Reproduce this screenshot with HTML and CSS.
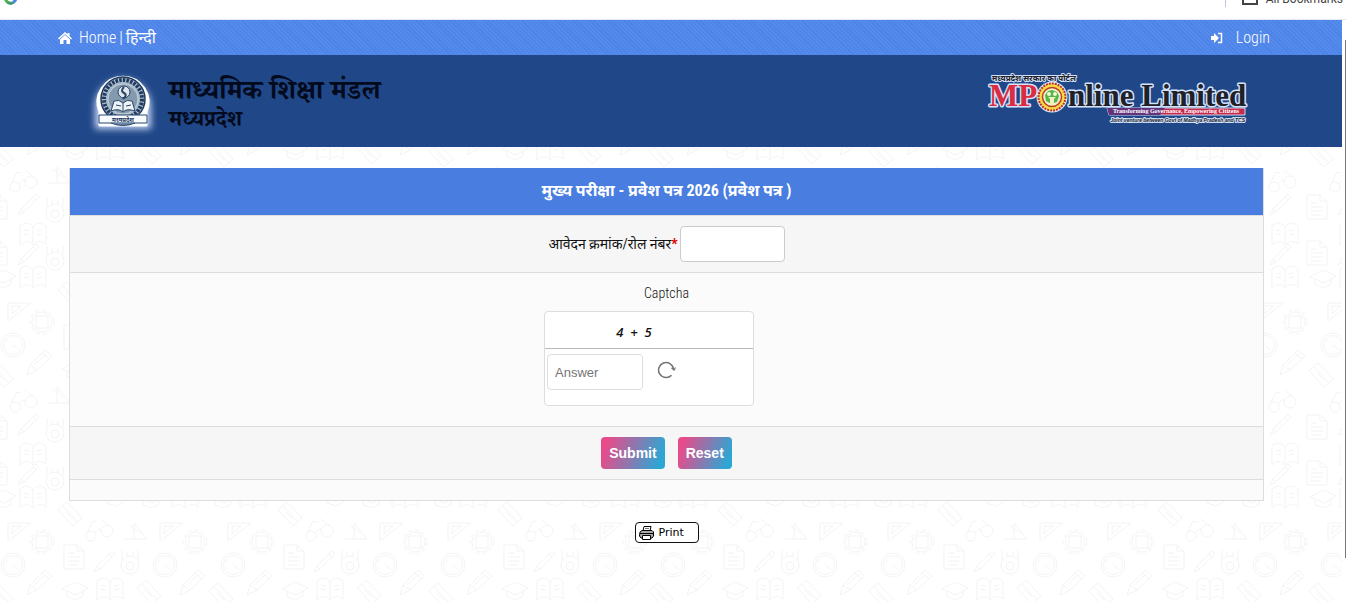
FILE: index.html
```html
<!DOCTYPE html>
<html lang="hi">
<head>
<meta charset="utf-8">
<title>माध्यमिक शिक्षा मंडल</title>
<link rel="stylesheet" href="styles.css">
</head>
<body>
<div class="bookmarks">
  <svg class="google" width="14" height="14" viewBox="0 0 14 14" fill="none" stroke-width="3"><path d="M2 5A5 5 0 0 0 5 12" stroke="#4caf50"/><path d="M4 11.500A5 5 0 0 0 10 11" stroke="#3d9a72"/><path d="M9.500 11A5 5 0 0 0 12 6" stroke="#4285f4"/></svg>
  <span class="divider"></span>
  <svg width="16" height="16" viewBox="0 0 16 16" fill="none" stroke="#444" stroke-width="2"><path d="M1 3h5l2 2h7v10H1z"/></svg>
  <span class="all">All Bookmarks</span>
</div>
<div class="viewport">
  <div class="page">
    <svg class="doodles" width="100%" height="100%" aria-hidden="true">
      <defs>
        <g id="tri"><path d="M0 0H23L0 18ZM4 3H13L4 11Z"/></g>
        <g id="gear"><circle r="10"/><circle r="12" stroke-dasharray="4 3"/><path d="M-6-6H6V6H-6Z"/></g>
        <g id="clock"><circle r="12"/><circle r="9.500"/><path d="M0 0L6 5M-7-5L-5-3"/></g>
        <g id="doc"><path d="M0 0H13L20 6V24H0ZM13 0V6H20M4 8H10M4 12H16M4 16H16M4 20H14"/></g>
        <g id="pen"><path d="M0 22L3 16L18 1L21 4L6 19ZM3 16L6 19M15 4L18 7"/></g>
        <g id="medal"><circle r="9" cy="3"/><circle r="4" cy="4"/><path d="M-8-2V-12M8-2V-12M-3-5V-10M3-5V-10"/></g>
        <g id="cap"><path d="M0 7L13 0L26 6L14 13ZM5 10V15L14 18L21 14V9"/></g>
        <g id="book"><path d="M0 4C5 0 9 0 13 5C17 0 21 0 26 4V22C20 18 17 19 13 23C9 18 5 19 0 23ZM13 5V23M4 8L9 9M4 12L9 13M17 9L22 8M17 13L22 12"/></g>
        <g id="pencil"><path d="M0 25L3 15L18 0L25 6L10 20ZM3 15L10 20M15 3L22 9M7 15L19 4"/></g>
        <g id="eraser"><path d="M0 8L9 0L24 16L15 24ZM5 4L20 20M8 10L15 17"/></g>
        <g id="glasses"><circle cx="6" cy="17" r="5"/><circle cx="22" cy="12" r="6"/><path d="M10 14Q14 8 17 11M2 14L8 2L12 3M25 7L16 0"/></g>
        <g id="square"><path d="M0 18H22L9 2V18M5 4L16 13"/></g>
        <pattern id="school" width="220" height="220" y="48" patternUnits="userSpaceOnUse">
          <g fill="none" stroke="#f3f3f3" stroke-width="1">
            <use href="#tri" x="8" y="15"/><use href="#gear" x="42" y="34"/><use href="#clock" x="13" y="57"/><use href="#doc" x="64" y="37"/><use href="#pen" x="94" y="42"/><use href="#medal" x="130" y="54"/><use href="#clock" x="165" y="57"/><use href="#gear" x="195" y="34"/><use href="#tri" x="160" y="15"/><use href="#square" x="125" y="13"/><use href="#glasses" x="85" y="11"/>
            <use href="#pencil" x="27" y="62"/><use href="#cap" x="62" y="74"/><use href="#book" x="97" y="69"/><use href="#eraser" x="137" y="72"/><use href="#pencil" x="180" y="62"/><use href="#eraser" x="209" y="75"/><use href="#eraser" x="-11" y="75"/>
            <use href="#glasses" x="9" y="102"/><use href="#square" x="48" y="97"/><use href="#pen" x="18" y="125"/><use href="#medal" x="55" y="142"/><use href="#book" x="20" y="154"/><use href="#pen" x="18" y="175"/><use href="#medal" x="55" y="190"/><use href="#book" x="20" y="197"/>
            <use href="#glasses" x="168" y="102"/><use href="#pen" x="170" y="125"/><use href="#book" x="172" y="154"/><use href="#pen" x="170" y="175"/><use href="#book" x="172" y="197"/><use href="#doc" x="207" y="127"/><use href="#doc" x="-13" y="127"/><use href="#doc" x="207" y="173"/><use href="#doc" x="-13" y="173"/><use href="#cap" x="210" y="202"/><use href="#cap" x="-10" y="202"/><use href="#cap" x="138" y="202"/>
            <use href="#eraser" x="58" y="-6"/><use href="#eraser" x="58" y="214"/><use href="#cap" x="102" y="200"/>
          </g>
        </pattern>
      </defs>
      <rect width="100%" height="100%" fill="url(#school)"/>
    </svg>
    <nav class="topbar">
      <div class="links">
        <svg width="14" height="12" viewBox="0 0 14 12" fill="#fff"><path d="M7 0L0 6.500L1 7.500L7 2.200L13 7.500L14 6.500L11.500 4V1H9.500V2.300Z"/><path d="M2 7.500L7 3L12 7.500V12H8.500V8H5.500V12H2Z"/></svg>
        <a href="#">Home</a><span class="bar">|</span><a class="hindi" href="#">हिन्दी</a>
      </div>
      <a class="login" href="#">
        <svg width="12" height="12" viewBox="0 0 12 12"><path d="M0 4H3V1L8 6L3 11V8H0Z" fill="#fff"/><path d="M7 1.500H10.500V10.500H7" fill="none" stroke="#fff" stroke-width="1.500"/></svg>
        <span>Login</span>
      </a>
    </nav>
    <header class="masthead">
      <div class="board">
        <svg width="78" height="76" viewBox="0 0 78 76">
          <defs><filter id="glow" x="-30%" y="-30%" width="160%" height="160%"><feGaussianBlur stdDeviation="3.500"/></filter></defs>
          <path d="M11 44A28 28 0 1 1 67 44V66H11Z" fill="#c4d6f5" filter="url(#glow)"/>
          <path d="M16 49A25 25 0 1 1 62 49V62H16Z" fill="#fff" stroke="#fff" stroke-width="3" stroke-linejoin="round"/>
          <circle cx="39" cy="36" r="22" fill="#a9bbcb" stroke="#20395c" stroke-width="1.500"/>
          <circle cx="39" cy="36" r="19" fill="none" stroke="#203a61" stroke-width="4" stroke-dasharray="2.500 1.200"/>
          <circle cx="39" cy="36" r="15" fill="#8299ae" stroke="#c4d0da" stroke-width="1"/>
          <circle cx="40" cy="29" r="6" fill="#dce6ec" stroke="#294365"/><path d="M40 24Q36 28 40 30T39 36" fill="none" stroke="#294365" stroke-width="2"/>
          <path d="M27 48L30 38Q35 36 39 40Q43 36 48 38L51 48Q43 45 39 49Q35 45 27 48Z" fill="#edf3f6" stroke="#294365"/><path d="M39 40V48M32 42L37 43M42 43L47 42" stroke="#294365"/>
          <path d="M15 52H63V60H15Z" fill="#f7faff" stroke="#29466f"/><path d="M27 60Q39 65 51 60" fill="#6c89a3" stroke="#29466f"/>
          <text class="seal" x="39" y="59" text-anchor="middle">मध्यप्रदेश</text>
        </svg>
        <div class="names"><h1>माध्यमिक शिक्षा मंडल</h1><p>मध्यप्रदेश</p></div>
      </div>
      <svg class="mponline" width="264" height="58" viewBox="0 0 264 58">
        <g class="halo"><text class="brand mp" x="4" y="38">MP</text><text class="brand" x="83" y="38">nline Limited</text><text class="portal" x="7" y="13">मध्यप्रदेश सरकार का पोर्टल</text><text class="joint" x="260" y="54" text-anchor="end">Joint venture between Govt of Madhya Pradesh and TCS</text></g>
        <path d="M122 40H260V47H124Z" fill="#c7284b" stroke="#ccdaf0"/><path d="M122 40H180L175 47H124Z" fill="#65327c"/>
        <text class="tag" x="191" y="45" text-anchor="middle">Transforming Governance, Empowering Citizens</text>
        <circle cx="67" cy="29" r="15.500" fill="#dce7f5"/><circle cx="67" cy="29" r="13.500" fill="#f5dc43" stroke="#bd302b" stroke-width="2" stroke-dasharray="2 1"/><circle cx="67" cy="29" r="9.500" fill="#edf3c2" stroke="#c23b2f" stroke-width="1.500"/>
        <path d="M65 35L61 33L60 27L63 23L67 22L72 24L74 28L72 34L69 35Z" fill="#55b54e"/><circle cx="64" cy="26" r="2" fill="#f5f4d4"/><circle cx="70" cy="26" r="2" fill="#f5f4d4"/><path d="M63 29H71L69 31V36H65V31Z" fill="#f2efbf"/>
      </svg>
    </header>
    <main>
      <form class="panel">
        <h2>मुख्य परीक्षा - प्रवेश पत्र 2026 (प्रवेश पत्र )</h2>
        <div class="row roll"><label for="roll">आवेदन क्रमांक/रोल नंबर<b>*</b></label><input id="roll" type="text"></div>
        <div class="row captcha">
          <label for="answer">Captcha</label>
          <div class="box">
            <div class="sum">4&nbsp; + &nbsp;5</div>
            <div class="answer"><input id="answer" type="text" placeholder="Answer"><button class="refresh" type="button" aria-label="Refresh"><svg width="20" height="18" viewBox="0 0 20 18" fill="none" stroke="#747474" stroke-width="1.500"><path d="M14.500 14.200A7.500 7.500 0 1 1 16.500 8"/><path d="M14.500 7L17 9L18.500 6.500" stroke-width="1.200"/></svg></button></div>
          </div>
        </div>
        <div class="row actions"><button type="submit">Submit</button><button type="reset">Reset</button></div>
        <div class="row blank"></div>
      </form>
      <button class="print" type="button"><svg width="15" height="14" viewBox="0 0 15 14" stroke="#000" fill="#fff"><path d="M4 5L5 .5H12L11 5"/><path d="M1 6L3 4.500H13L14.500 6V10L13 12H2L.5 10Z" fill="#aaa"/><path d="M1 7.500H14" /><path d="M3.500 9.500H11.500V13.500H3.500Z"/><path d="M6 2.500H10" stroke="#777"/></svg>Print</button>
    </main>
  </div>
  <div class="scroll"></div>
</div>
</body>
</html>
```
FILE: styles.css
```css
* { box-sizing: border-box; }
body { margin: 0; min-height: 100vh; display: flex; flex-direction: column; background: #fff; color: #111; font: 14px/20px "Roboto Condensed", "Liberation Sans", "Noto Sans Devanagari", sans-serif; }
h1, h2, p { margin: 0; }
a { color: inherit; text-decoration: none; }
.bookmarks { height: 20px; display: flex; align-items: flex-start; overflow: hidden; border-bottom: 1px solid #e3e8f2; color: #444; }
.bookmarks > * { flex: none; margin-top: -11px; }
.bookmarks .google { margin-left: 4px; margin-top: -9px; }
.divider { width: 1px; height: 18px; margin-left: auto; margin-right: 16px; background: #bbc8dc; }
.all { margin-left: 8px; margin-right: 3px; font: 12px/20px Roboto, sans-serif; }
.viewport { flex: 1; display: flex; }
.page { flex: 1; min-width: 0; position: relative; isolation: isolate; }
.doodles { position: absolute; inset: 0; z-index: -1; }
.scroll { width: 4px; margin: 20px 0 44px; border-right: 1px solid #777; }
.topbar { height: 35px; padding: 0 72px 0 58px; display: flex; align-items: center; justify-content: space-between; color: #fff; font-size: 16px; font-weight: 300; background: repeating-linear-gradient(45deg, #4c82e6 0, #4c82e6 1px, #558aed 1px, #558aed 3px); }
.links, .login { display: flex; align-items: center; }
.links svg { margin-right: 7px; }
.bar { margin: 0 3px; }
.hindi { font-weight: 400; }
.login svg { margin-right: 13px; }
.masthead { height: 92px; padding: 0 93px 0 84px; display: flex; align-items: center; justify-content: space-between; background: #204788; }
.board { display: flex; align-items: center; }
.names { margin-left: 7px; padding-top: 16px; color: #030a1c; font-family: "Noto Serif Devanagari", "Noto Sans Devanagari", serif; font-weight: bold; }
.names h1 { font-size: 27px; line-height: 28px; }
.names p { font-size: 22px; line-height: 28px; }
.seal { font: bold 6px "Noto Sans Devanagari", sans-serif; fill: #152f59; }
.mponline { margin-top: -8px; }
.halo text { paint-order: stroke; stroke: #d4e2fa; stroke-width: 3px; stroke-linejoin: round; fill: #202027; }
.halo .portal { font: bold 8px "Noto Sans Devanagari", sans-serif; stroke-width: 2px; }
.brand { font: bold 31px "Liberation Serif", serif; }
.halo .mp { fill: #dc2c40; }
.tag { font: bold 6px "Liberation Serif", serif; fill: #fff; }
.halo .joint { font: italic bold 5px "Liberation Sans", sans-serif; stroke-width: 2px; }
main { padding: 21px 78px 0 69px; display: flex; flex-direction: column; align-items: center; }
.panel { width: 100%; border: 1px solid #ddd; border-top: 0; background: #fbfbfb; }
.panel h2 { height: 47px; color: #fff; background: #497ee0; text-align: center; font-size: 16px; line-height: 46px; }
.row { display: flex; align-items: center; justify-content: center; border-top: 1px solid #ddd; }
.roll { padding: 10px; gap: 2px; background: #f6f6f6; }
.roll b { color: #d00; }
input { height: 36px; border: 1px solid #ccc; border-radius: 4px; background: #fff; font: 13px "Liberation Sans", sans-serif; padding: 0 7px; }
.roll input { width: 105px; }
.captcha { flex-direction: column; padding: 10px 0 20px; }
.captcha label { font-weight: 300; }
.box { width: 210px; margin: 8px 35px 0 0; border: 1px solid #ddd; border-radius: 4px; background: #fff; }
.sum { height: 37px; padding: 2px 30px 0 0; text-align: center; font: italic 600 13px/36px "Open Sans", sans-serif; border-bottom: 1px solid #bbb; }
.answer { display: flex; align-items: flex-start; padding: 5px 2px 15px; }
.answer input { width: 96px; border-color: #ddd; }
.answer input::placeholder { color: #757575; }
.refresh { margin-left: 14px; padding: 7px 0; border: 0; background: none; line-height: 0; }
.actions { padding: 10px; gap: 13px; background: #f6f6f6; }
.actions button { height: 32px; padding: 0 8px; border: 0; border-radius: 4px; color: #fff; background: linear-gradient(110deg, #e84b8a 10%, #2ca7d4 90%); font: bold 14px "Liberation Sans", sans-serif; }
.blank { height: 21px; }
.print { margin-top: 21px; width: 64px; height: 21px; padding: 0 0 0 3px; display: flex; align-items: center; gap: 5px; border: 1px solid #111; border-radius: 4px; background: #fff; color: #000; font: 11px "DejaVu Sans", sans-serif; }
```
